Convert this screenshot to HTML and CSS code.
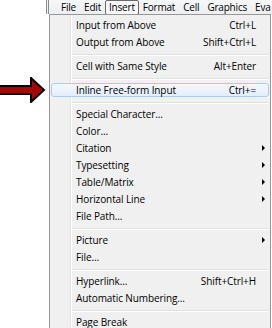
FILE: index.html
```html
<!DOCTYPE html>
<html lang="en">
<head>
    <meta charset="UTF-8">
    <title>Insert menu</title>
    <link rel="stylesheet" href="styles.css">
</head>
<body>
    <div class="app">
        <nav class="menubar">
            <span class="top">File</span>
            <span class="top">Edit</span>
            <span class="top open">Insert</span>
            <span class="top">Format</span>
            <span class="top">Cell</span>
            <span class="top">Graphics</span>
            <span class="top">Eva</span>
        </nav>
        <ul class="menu">
            <li class="item"><span class="label">Input from Above</span><span class="key">Ctrl+L</span><span class="sub"></span></li>
            <li class="item"><span class="label">Output from Above</span><span class="key">Shift+Ctrl+L</span><span class="sub"></span></li>
            <li class="sep"></li>
            <li class="item"><span class="label">Cell with Same Style</span><span class="key">Alt+Enter</span><span class="sub"></span></li>
            <li class="sep"></li>
            <li class="item hot"><span class="label">Inline Free-form Input</span><span class="key">Ctrl+=</span><span class="sub"></span></li>
            <li class="sep"></li>
            <li class="item"><span class="label">Special Character...</span><span class="sub"></span></li>
            <li class="item"><span class="label">Color...</span><span class="sub"></span></li>
            <li class="item"><span class="label">Citation</span><span class="sub more"></span></li>
            <li class="item"><span class="label">Typesetting</span><span class="sub more"></span></li>
            <li class="item"><span class="label">Table/Matrix</span><span class="sub more"></span></li>
            <li class="item"><span class="label">Horizontal Line</span><span class="sub more"></span></li>
            <li class="item"><span class="label">File Path...</span><span class="sub"></span></li>
            <li class="sep"></li>
            <li class="item"><span class="label">Picture</span><span class="sub more"></span></li>
            <li class="item"><span class="label">File...</span><span class="sub"></span></li>
            <li class="sep"></li>
            <li class="item"><span class="label">Hyperlink...</span><span class="key">Shift+Ctrl+H</span><span class="sub"></span></li>
            <li class="item"><span class="label">Automatic Numbering...</span><span class="sub"></span></li>
            <li class="sep"></li>
            <li class="item"><span class="label">Page Break</span><span class="sub"></span></li>
        </ul>
    </div>

    <!-- annotation arrow pointing at the highlighted entry -->
    <svg class="pointer" width="46" height="26" viewBox="0 0 46 26">
        <polygon points="-2,9 31,9 31,1 44,13 31,25 31,17 -2,17" fill="#a80606" stroke="#000" stroke-width="2" stroke-linejoin="miter"/>
    </svg>
</body>
</html>
```

FILE: styles.css
```css
html, body{
    margin: 0;
    padding: 0;
}
body{
    width: 272px;
    height: 328px;
    overflow: hidden;
    background: #fff;
    position: relative;
    font-family: "Open Sans", "Noto Sans", sans-serif;
    font-size: 10px;
    color: #000;
}
.app{
    margin-left: 46px;
}
.menubar{
    display: flex;
    align-items: center;
    height: 14px;
    padding-left: 8px;
    overflow: hidden;
    white-space: nowrap;
    letter-spacing: -0.2px;
    border-left: 3px double #8a8a8a;
    background: linear-gradient(#f6f7f8, #eceef0);
}
.top{
    padding: 0 3px;
    line-height: 13px;
    border: 1px solid transparent;
    border-radius: 2px;
}
.top.open{
    border-color: #6a6a6a;
    background: #f8f8f8;
}
.menu{
    list-style: none;
    margin: 0 0 0 3px;
    padding: 1.5px 0 0 0;
    width: 222px;
    height: 314px;
    box-sizing: border-box;
    overflow: hidden;
    border-left: 1px solid #979797;
    border-right: 1px solid #979797;
    border-top: 1px solid #979797;
    background: linear-gradient(to right, #f0f0f0 20px, #e2e3e3 20px, #e2e3e3 21px, #fff 21px, #fff 22px, #f0f0f0 22px);
}
.item{
    display: flex;
    align-items: center;
    height: 17px;
    padding-left: 26px;
    box-sizing: border-box;
    white-space: nowrap;
    letter-spacing: -0.1px;
}
.label{
    flex: 1;
}
.key{
    text-align: right;
}
.sub{
    width: 14px;
    display: flex;
    justify-content: center;
}
.sub.more::after{
    content: "";
    display: block;
    border-left: 3px solid #000;
    border-top: 3px solid transparent;
    border-bottom: 3px solid transparent;
}
.item.hot{
    position: relative;
}
.item.hot::before{
    content: "";
    position: absolute;
    left: 1px;
    right: 1px;
    top: 1.5px;
    bottom: 1.5px;
    border: 1px solid #a9cdf2;
    border-radius: 3px;
    background: linear-gradient(#f3f8fd, #e4eefb);
}
.item.hot span{
    position: relative;
}
.sep{
    height: 7px;
    margin-left: 22px;
    margin-right: 2px;
    background: linear-gradient(transparent 3px, #e0e0e0 3px, #e0e0e0 4px, #fff 4px, #fff 5px, transparent 5px);
}
.pointer{
    position: absolute;
    left: 0;
    top: 77px;
}
```
